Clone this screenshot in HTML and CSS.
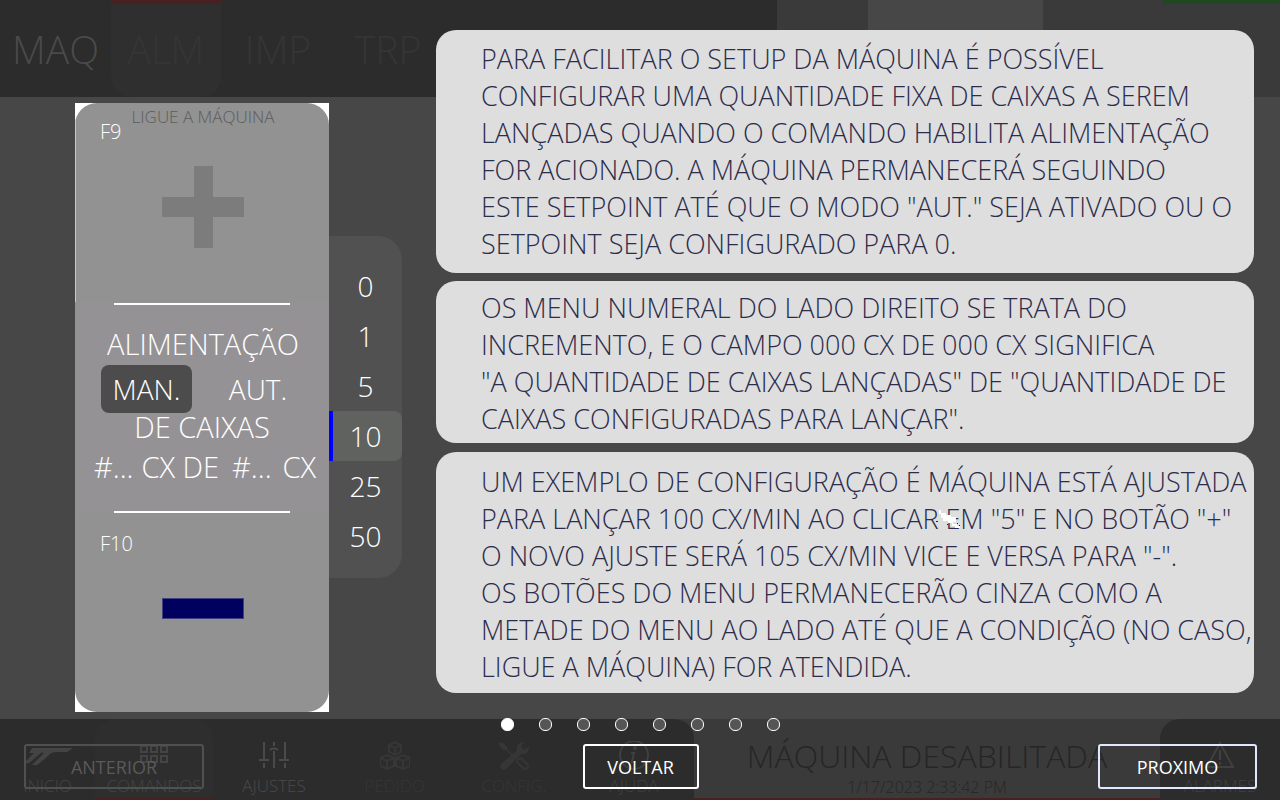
FILE: index.html
```html
<!DOCTYPE html>
<html lang="pt-BR">
<head>
<meta charset="utf-8">
<title>Ajuda - Alimentação</title>
<link rel="stylesheet" href="styles.css">
</head>
<body>
<div class="screen">
  <div class="backdrop">
    <header class="top">
      <nav class="tabs">
        <a class="tab tab-maq" href="#maq">MAQ</a>
        <a class="tab tab-active" href="#alm">ALM</a>
        <a class="tab" href="#imp">IMP</a>
        <a class="tab" href="#trp">TRP</a>
      </nav>
      <div class="top-block"></div>
      <div class="top-block top-block-light"></div>
      <div class="top-block"></div>
      <div class="top-block top-block-ok"></div>
    </header>
    <footer class="bottom">
      <nav class="dock">
        <a class="dock-item dock-first" href="#inicio">
          <svg class="icon-logo" viewBox="0 0 50 30"><path d="M9 7H50l-6 4H33c-5 0-7 3-9 5L14 24H9L20 13c1-1 0-2-2-1L6 22l-6 1L11 12H6z"/></svg>
          <span>INICIO</span>
        </a>
        <a class="dock-item dock-active" href="#comandos">
          <svg class="icon" viewBox="0 0 30 30"><path d="M2 5h6v6H2zM12 5h6v6h-6zM22 5h6v6h-6zM2 15h6v6H2zM12 15h6v6h-6zM22 15h6v6h-6z"/></svg>
          <span>COMANDOS</span>
        </a>
        <a class="dock-item dock-bright" href="#ajustes">
          <svg class="icon" viewBox="0 0 30 30"><path d="M5 1v17M0 19h10M5 22v5M15 1v4M11 9c2-2 6-2 8 0M15 10v17M26 1v17M20 19h10M26 22v5"/></svg>
          <span>AJUSTES</span>
        </a>
        <a class="dock-item" href="#pedido">
          <svg class="icon" viewBox="0 0 30 30"><path d="M15 1l6 3v7l-6 3-6-3V4zM9 4l6 3 6-3M15 7v7M7 14l7 3v8l-7 3-7-3v-8zM0 17l7 3 7-3M7 20v8M23 14l7 3v8l-7 3-7-3v-8zM16 17l7 3 7-3M23 20v8"/></svg>
          <span>PEDIDO</span>
        </a>
        <a class="dock-item" href="#config">
          <svg class="icon" viewBox="0 0 30 30"><path class="solid" d="M0 1l4 1 4 4v2l7 7-1 1-7-7H4L0 4z"/><path d="M19 18l3-1 7 7c0 3-2 4-4 4l-7-7z"/><path class="solid" d="M2 23L18 9c-1-5 2-8 7-8l-3 4 3 4 5-3c0 5-3 8-8 7L7 28c-4 2-7-1-5-5z"/></svg>
          <span>CONFIG.</span>
        </a>
        <a class="dock-item dock-help" href="#ajuda">
          <svg class="icon" viewBox="0 0 30 30"><circle cx="15" cy="14" r="14"/><circle class="solid" cx="16" cy="7" r="2"/><path d="M12 12h3l-2 9h4"/></svg>
          <span>AJUDA</span>
        </a>
      </nav>
      <div class="status">
        <strong class="status-text">MÁQUINA DESABILITADA</strong>
        <time class="status-time">1/17/2023 2:33:42 PM</time>
      </div>
      <div class="alarm">
        <a class="dock-item dock-help" href="#alarmes">
          <svg class="icon" viewBox="0 0 30 30"><path d="M15 2L28 26H2zM15 9v10M15 21v3"/></svg>
          <span>ALARMES</span>
        </a>
      </div>
    </footer>
  </div>

  <main class="guide">
    <div class="guide-body">
      <section class="demo">
        <div class="panel">
          <div class="panel-inner">
            <div class="zone zone-plus">
              <p class="hint">LIGUE A MÁQUINA</p>
              <p class="key">F9</p>
              <button class="step" aria-label="Aumentar"><svg class="plus" viewBox="0 0 82 82"><path d="M32 0h19v31h31v20H51v31H32V51H0V31h32z"/></svg></button>
            </div>
            <div class="zone-mid">
              <hr class="rule">
              <h2 class="mid-title">ALIMENTAÇÃO</h2>
              <div class="modes">
                <button class="mode mode-on">MAN.</button>
                <button class="mode">AUT.</button>
              </div>
              <p class="mid-line">DE CAIXAS</p>
              <p class="counts"><span>#...</span><span>CX DE</span><span class="count-total">#...</span><span>CX</span></p>
              <hr class="rule">
            </div>
            <div class="zone zone-minus">
              <p class="key">F10</p>
              <button class="step minus" aria-label="Diminuir"></button>
            </div>
          </div>
        </div>
        <div class="steps">
          <button class="inc">0</button>
          <button class="inc">1</button>
          <button class="inc">5</button>
          <button class="inc inc-on">10</button>
          <button class="inc">25</button>
          <button class="inc">50</button>
        </div>
      </section>
      <section class="cards">
        <p class="card card-setup">PARA FACILITAR O SETUP DA MÁQUINA É POSSÍVEL<br>CONFIGURAR UMA QUANTIDADE FIXA DE CAIXAS A SEREM<br>LANÇADAS QUANDO O COMANDO HABILITA ALIMENTAÇÃO<br>FOR ACIONADO. A MÁQUINA PERMANECERÁ SEGUINDO<br>ESTE SETPOINT ATÉ QUE O MODO "AUT." SEJA ATIVADO OU O<br>SETPOINT SEJA CONFIGURADO PARA 0.</p>
        <p class="card card-menu">OS MENU NUMERAL DO LADO DIREITO SE TRATA DO<br>INCREMENTO, E O CAMPO 000 CX DE 000 CX SIGNIFICA<br>"A QUANTIDADE DE CAIXAS LANÇADAS" DE "QUANTIDADE DE<br>CAIXAS CONFIGURADAS PARA LANÇAR".</p>
        <p class="card card-example">UM EXEMPLO DE CONFIGURAÇÃO É MÁQUINA ESTÁ AJUSTADA<br>PARA LANÇAR 100 CX/MIN AO CLICAR EM "5" E NO BOTÃO "+"<br>O NOVO AJUSTE SERÁ 105 CX/MIN VICE E VERSA PARA "-".<br>OS BOTÕES DO MENU PERMANECERÃO CINZA COMO A<br>METADE DO MENU AO LADO ATÉ QUE A CONDIÇÃO (NO CASO,<br>LIGUE A MÁQUINA) FOR ATENDIDA.
          <svg class="pointer" viewBox="0 0 28 20"><path class="pointer-light" d="M4 1h2v3h5v2h5v2h5v5h-3v2h4v2h3v2h-5v-2h-3v-3h-4v-2H8v-3H6V5H4z"/><path class="pointer-dark" d="M1 12h2v1H1zM12 15h1v1h-1zM22 14h1v1h-1zM24 16h1v1h-1z"/></svg>
        </p>
      </section>
    </div>
    <div class="dots">
      <button class="dot dot-on" aria-label="Página 1"></button>
      <button class="dot" aria-label="Página 2"></button>
      <button class="dot" aria-label="Página 3"></button>
      <button class="dot" aria-label="Página 4"></button>
      <button class="dot" aria-label="Página 5"></button>
      <button class="dot" aria-label="Página 6"></button>
      <button class="dot" aria-label="Página 7"></button>
      <button class="dot" aria-label="Página 8"></button>
    </div>
    <div class="actions">
      <button class="action action-prev">ANTERIOR</button>
      <button class="action action-back">VOLTAR</button>
      <button class="action action-next">PROXIMO</button>
    </div>
  </main>
</div>
</body>
</html>
```

FILE: styles.css
```css
* { box-sizing: border-box; }
body {
  margin: 0;
  background: #474747;
  font-family: "Open Sans", "Noto Sans", sans-serif;
  font-weight: 300;
  color: #fff;
}
p, h2, hr { margin: 0; font-weight: 300; }
button {
  margin: 0;
  padding: 0;
  border: 0;
  background: none;
  color: inherit;
  font: inherit;
}
a { color: inherit; text-decoration: none; }

.screen { display: grid; min-height: 100vh; }
.backdrop, .guide { grid-area: 1 / 1; min-width: 0; }

/* Machine screen, dimmed behind the guide */
.backdrop { display: flex; flex-direction: column; justify-content: space-between; }
.top { display: grid; grid-template-columns: 777fr 91fr 175fr 120fr 117fr; height: 97px; }
.tabs {
  display: grid;
  grid-template-columns: 111fr 110fr 114fr 106fr 336fr;
  background: #2c2c2c;
  color: #353535;
  font-size: 39px;
}
.tab { display: flex; align-items: center; justify-content: center; padding-bottom: 5px; border-top: 4px solid transparent; }
.tab-maq { color: #4a4a4a; }
.tab-active { background: #2f2f2f; border-top-color: #482020; border-radius: 0 0 20px 20px; }
.top-block { background: #3a3a3a; }
.top-block-light { background: #474747; }
.top-block-ok { border-top: 4px solid #204820; }

.bottom { display: grid; grid-template-columns: 694fr 466fr 120fr; height: 81px; background: #3a3a3a; }
.dock {
  display: grid;
  grid-template-columns: 95fr 118fr 122fr 119fr 120fr 120fr;
  background: #2c2c2c;
  border-top-right-radius: 20px;
}
.dock-item {
  display: flex;
  flex-direction: column;
  align-items: center;
  padding-top: 22px;
  gap: 3px;
  color: #363636;
  font-size: 17px;
  line-height: 24px;
}
.dock-first, .dock-active { color: #444; }
.dock-bright { color: #4a4a4a; }
.dock-help { color: #404040; }
.dock-active { background: #2e2e2e; border-bottom: 4px solid #482020; border-radius: 20px 20px 0 0; }
.icon { width: 30px; height: 30px; fill: none; stroke: currentColor; stroke-width: 2; }
.icon-logo { width: 50px; height: 30px; fill: #444; }
.icon .solid { fill: currentColor; stroke: none; }
.status {
  display: flex;
  flex-direction: column;
  align-items: center;
  border-bottom: 4px solid #482020;
  padding-top: 14px;
  color: #262626;
}
.status-text { font-weight: 300; font-size: 32px; line-height: 46px; white-space: nowrap; }
.status-time { font-size: 16px; line-height: 16px; }
.alarm { background: #2c2c2c; border-top-left-radius: 20px; }

/* Guide */
.guide { display: flex; flex-direction: column; justify-content: space-between; padding-bottom: 11px; }
.guide-body { display: flex; gap: 34px; padding: 30px 26px 0 75px; }
.demo { display: flex; align-items: flex-start; padding-top: 73px; }
.panel { width: 254px; background: #fff; }
.panel-inner { background: #929292; border-radius: 22px; overflow: hidden; text-align: center; }
.zone { display: flex; flex-direction: column; padding-left: 2px; }
.zone-plus { height: 199px; box-shadow: inset 1px 0 #c8c8c8; padding-top: 4px; }
.hint { color: #5c5c5c; font-size: 17px; line-height: 20px; }
.key { padding-left: 23px; font-size: 20px; line-height: 26px; text-align: left; }
.zone-plus .key { margin-top: -8px; }
.step { align-self: center; }
.zone-plus .step { margin-top: 21px; }
.plus { display: block; width: 82px; height: 82px; fill: #7c7c7c; }
.zone-mid { display: flex; flex-direction: column; justify-content: space-between; height: 211px; background: #959295; font-size: 29px; }
.rule { align-self: center; width: 176px; height: 2px; border: 0; background: #fff; margin: 1px 0 0; }
.mid-title { padding: 20px 0 2px 2px; font-size: 29px; line-height: 38px; }
.modes { display: grid; grid-template-columns: 91px 132px; padding-left: 26px; height: 48px; flex: none; font-size: 28px; }
.mode { padding-bottom: 0; }
.mode-on { background: #4c4c4c; border-radius: 8px; }
.mid-line { line-height: 28px; }
.counts { display: flex; gap: 8px; padding: 1px 0 18px 19px; line-height: 50px; white-space: nowrap; }
.count-total { margin-left: 5px; margin-right: 3px; }
.zone-minus { height: 199px; padding-top: 18px; }
.minus { width: 82px; height: 21px; margin-top: 41px; background: #00005f; border: 1px solid #404080; }

.steps {
  display: flex;
  flex-direction: column;
  width: 73px;
  margin-top: 133px;
  padding: 25px 0 17px;
  background: #515151;
  border-radius: 0 24px 24px 0;
  font-size: 28px;
}
.inc { height: 50px; padding-bottom: 1px; }
.inc-on { background: #5f625f; border-left: 4px solid #00f; border-right: 4px solid #5f625f; border-radius: 0 8px 8px 0; }

.cards { flex: 1; display: flex; flex-direction: column; gap: 8px; min-width: 0; }
.card {
  background: #dedede;
  border-radius: 20px;
  color: #2c2c4c;
  font-size: 27px;
  line-height: 37px;
  padding-left: 45px;
  white-space: nowrap;
}
.card-setup { padding-top: 10px; padding-bottom: 11px; }
.card-menu { padding-top: 8px; padding-bottom: 6px; margin-bottom: 1px; }
.card-example { position: relative; padding-top: 11px; padding-bottom: 8px; }
.pointer { position: absolute; left: 499px; top: 57px; width: 28px; height: 20px; }
.pointer-light { fill: #fff; }
.pointer-dark { fill: #222; }

.dots { display: flex; justify-content: center; gap: 25px; padding-bottom: 7px; }
.dot { width: 13px; height: 13px; border: 1px solid #fff; border-radius: 6px; background: #555; }
.dot-on { background: #fff; }
.actions { display: grid; grid-template-columns: 1fr auto 1fr; padding: 0 23px 0 24px; }
.action { height: 45px; border: 2px solid #fff; border-radius: 3px; font-size: 18px; font-weight: 400; }
.action-prev { justify-self: start; width: 180px; border-color: #505050; color: #5a5a5a; }
.action-back { width: 116px; }
.action-next { justify-self: end; width: 159px; border-color: #e0e8ff; }
```
